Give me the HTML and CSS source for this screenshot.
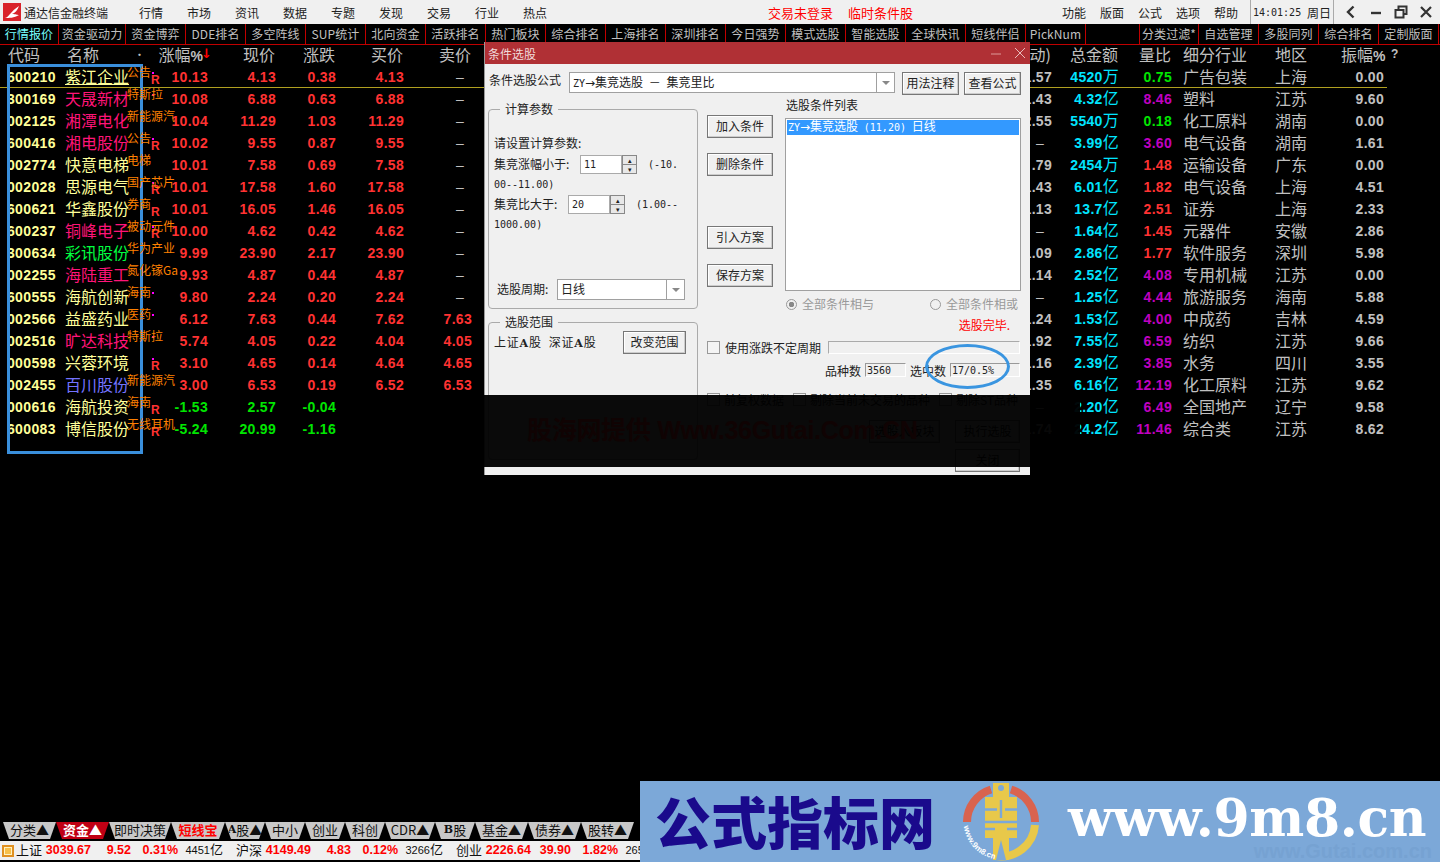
FILE: index.html
```html
<!DOCTYPE html>
<html lang="zh-CN">
<head>
    <meta charset="UTF-8">
    <title>通达信金融终端</title>
    <link rel="stylesheet" href="styles.css">
</head>
<body>
<div class="app">
    <div class="titlebar">
        <svg class="app-icon" viewBox="0 0 18 18"><rect width="18" height="18" fill="#d9232a"/><path d="M2 15 C6 14 8 8 16 3 C14 8 12 10 9 11 C13 11 14 12 16 12 C11 15 6 15 2 15Z" fill="#fff"/></svg>
        <span class="app-name">通达信金融终端</span>
        <nav class="menu menu-left"><span>行情</span><span>市场</span><span>资讯</span><span>数据</span><span>专题</span><span>发现</span><span>交易</span><span>行业</span><span>热点</span></nav>
        <div class="notice"><span>交易未登录</span><span>临时条件股</span></div>
        <nav class="menu menu-right"><span>功能</span><span>版面</span><span>公式</span><span>选项</span><span>帮助</span></nav>
        <div class="clock"><span class="clock-time">14:01:25</span><span class="clock-day">周日</span></div>
        <div class="win-btns">
            <svg viewBox="0 0 14 14"><path d="M9.5 1.5 L4 7 L9.5 12.5" fill="none" stroke="#333" stroke-width="2.4"/></svg>
            <svg viewBox="0 0 14 14"><path d="M2 8 H12" stroke="#333" stroke-width="2.4"/></svg>
            <svg viewBox="0 0 14 14"><path d="M1.5 5 H9.5 V12.5 H1.5Z M4.5 4.5 V1.5 H12.5 V9 H10" fill="none" stroke="#333" stroke-width="2"/></svg>
            <svg viewBox="0 0 14 14"><path d="M2 2 L12 12 M12 2 L2 12" stroke="#333" stroke-width="2.2"/></svg>
        </div>
    </div>

    <div class="tabbar">
        <span class="tab tab-first tab-on">行情报价</span>
        <span class="tab tab-w68">资金驱动力</span>
        <span class="tab">资金博弈</span>
        <span class="tab">DDE排名</span>
        <span class="tab">多空阵线</span>
        <span class="tab">SUP统计</span>
        <span class="tab">北向资金</span>
        <span class="tab">活跃排名</span>
        <span class="tab">热门板块</span>
        <span class="tab">综合排名</span>
        <span class="tab">上海排名</span>
        <span class="tab">深圳排名</span>
        <span class="tab">今日强势</span>
        <span class="tab">模式选股</span>
        <span class="tab">智能选股</span>
        <span class="tab">全球快讯</span>
        <span class="tab">短线伴侣</span>
        <span class="tab">PickNum</span>
        <span class="tab tab-w54"></span>
        <span class="tab tab-w59">分类过滤*</span>
        <span class="tab">自选管理</span>
        <span class="tab">多股同列</span>
        <span class="tab">综合排名</span>
        <span class="tab">定制版面</span>
    </div>

    <div class="quotes">
        <div class="row row-head">
            <span class="c-code">代码</span>
            <span class="c-name">名称<i class="head-dot">•</i></span>
            <span class="c-num">涨幅<b>%</b><i class="sort-arrow">↓</i></span>
            <span class="c-num">现价</span>
            <span class="c-num">涨跌</span>
            <span class="c-num">买价</span>
            <span class="c-num">卖价</span>
            <span class="c-num">(动)</span>
            <span class="c-num">总金额</span>
            <span class="c-num">量比</span>
            <span class="c-text">细分行业</span>
            <span class="c-text">地区</span>
            <span class="c-num">振幅<b>%</b></span>
            <span class="head-help">?</span>
        </div>

        <div class="row row-sel">
            <span class="c-code">600210</span>
            <span class="c-name n-yellow n-under">紫江企业<em class="tag">公告</em><i class="dot"></i><i class="flag">R</i></span>
            <span class="c-num up">10.13</span><span class="c-num up">4.13</span><span class="c-num up">0.38</span><span class="c-num up">4.13</span><span class="c-num dash">–</span>
            <span class="c-num plain">1.57</span>
            <span class="c-num total">4520<small>万</small></span><span class="c-num low">0.75</span>
            <span class="c-text">广告包装</span><span class="c-text">上海</span><span class="c-num plain">0.00</span>
        </div>
        <div class="row">
            <span class="c-code">300169</span>
            <span class="c-name n-pink">天晟新材<em class="tag">特斯拉</em><i class="dot"></i></span>
            <span class="c-num up">10.08</span><span class="c-num up">6.88</span><span class="c-num up">0.63</span><span class="c-num up">6.88</span><span class="c-num dash">–</span>
            <span class="c-num plain">1.43</span>
            <span class="c-num total">4.32<small>亿</small></span><span class="c-num high">8.46</span>
            <span class="c-text">塑料</span><span class="c-text">江苏</span><span class="c-num plain">9.60</span>
        </div>
        <div class="row">
            <span class="c-code">002125</span>
            <span class="c-name n-pink">湘潭电化<em class="tag">新能源汽</em></span>
            <span class="c-num up">10.04</span><span class="c-num up">11.29</span><span class="c-num up">1.03</span><span class="c-num up">11.29</span><span class="c-num dash">–</span>
            <span class="c-num plain">2.55</span>
            <span class="c-num total">5540<small>万</small></span><span class="c-num low">0.18</span>
            <span class="c-text">化工原料</span><span class="c-text">湖南</span><span class="c-num plain">0.00</span>
        </div>
        <div class="row">
            <span class="c-code">600416</span>
            <span class="c-name n-pink">湘电股份<em class="tag">公告</em><i class="dot"></i><i class="flag">R</i></span>
            <span class="c-num up">10.02</span><span class="c-num up">9.55</span><span class="c-num up">0.87</span><span class="c-num up">9.55</span><span class="c-num dash">–</span>
            <span class="c-num dash">–</span>
            <span class="c-num total">3.99<small>亿</small></span><span class="c-num high">3.60</span>
            <span class="c-text">电气设备</span><span class="c-text">湖南</span><span class="c-num plain">1.61</span>
        </div>
        <div class="row">
            <span class="c-code">002774</span>
            <span class="c-name n-yellow">快意电梯<em class="tag">电梯</em></span>
            <span class="c-num up">10.01</span><span class="c-num up">7.58</span><span class="c-num up">0.69</span><span class="c-num up">7.58</span><span class="c-num dash">–</span>
            <span class="c-num plain">.79</span>
            <span class="c-num total">2454<small>万</small></span><span class="c-num mid">1.48</span>
            <span class="c-text">运输设备</span><span class="c-text">广东</span><span class="c-num plain">0.00</span>
        </div>
        <div class="row">
            <span class="c-code">002028</span>
            <span class="c-name n-yellow">思源电气<em class="tag">国产芯片</em><i class="dot"></i><i class="flag">R</i></span>
            <span class="c-num up">10.01</span><span class="c-num up">17.58</span><span class="c-num up">1.60</span><span class="c-num up">17.58</span><span class="c-num dash">–</span>
            <span class="c-num plain">1.43</span>
            <span class="c-num total">6.01<small>亿</small></span><span class="c-num mid">1.82</span>
            <span class="c-text">电气设备</span><span class="c-text">上海</span><span class="c-num plain">4.51</span>
        </div>
        <div class="row">
            <span class="c-code">600621</span>
            <span class="c-name n-yellow">华鑫股份<em class="tag">券商</em><i class="flag">R</i></span>
            <span class="c-num up">10.01</span><span class="c-num up">16.05</span><span class="c-num up">1.46</span><span class="c-num up">16.05</span><span class="c-num dash">–</span>
            <span class="c-num plain">1.13</span>
            <span class="c-num total">13.7<small>亿</small></span><span class="c-num mid">2.51</span>
            <span class="c-text">证券</span><span class="c-text">上海</span><span class="c-num plain">2.33</span>
        </div>
        <div class="row">
            <span class="c-code">600237</span>
            <span class="c-name n-pink">铜峰电子<em class="tag">被动元件</em><i class="dot"></i><i class="flag">R</i></span>
            <span class="c-num up">10.00</span><span class="c-num up">4.62</span><span class="c-num up">0.42</span><span class="c-num up">4.62</span><span class="c-num dash">–</span>
            <span class="c-num dash">–</span>
            <span class="c-num total">1.64<small>亿</small></span><span class="c-num mid">1.45</span>
            <span class="c-text">元器件</span><span class="c-text">安徽</span><span class="c-num plain">2.86</span>
        </div>
        <div class="row">
            <span class="c-code">300634</span>
            <span class="c-name n-green">彩讯股份<em class="tag">华为产业</em></span>
            <span class="c-num up">9.99</span><span class="c-num up">23.90</span><span class="c-num up">2.17</span><span class="c-num up">23.90</span><span class="c-num dash">–</span>
            <span class="c-num plain">1.09</span>
            <span class="c-num total">2.86<small>亿</small></span><span class="c-num mid">1.77</span>
            <span class="c-text">软件服务</span><span class="c-text">深圳</span><span class="c-num plain">5.98</span>
        </div>
        <div class="row">
            <span class="c-code">002255</span>
            <span class="c-name n-pink">海陆重工<em class="tag">氮化镓Ga</em></span>
            <span class="c-num up">9.93</span><span class="c-num up">4.87</span><span class="c-num up">0.44</span><span class="c-num up">4.87</span><span class="c-num dash">–</span>
            <span class="c-num plain">1.14</span>
            <span class="c-num total">2.52<small>亿</small></span><span class="c-num high">4.08</span>
            <span class="c-text">专用机械</span><span class="c-text">江苏</span><span class="c-num plain">0.00</span>
        </div>
        <div class="row">
            <span class="c-code">600555</span>
            <span class="c-name n-yellow">海航创新<em class="tag">海南</em><i class="dot"></i></span>
            <span class="c-num up">9.80</span><span class="c-num up">2.24</span><span class="c-num up">0.20</span><span class="c-num up">2.24</span><span class="c-num dash">–</span>
            <span class="c-num dash">–</span>
            <span class="c-num total">1.25<small>亿</small></span><span class="c-num high">4.44</span>
            <span class="c-text">旅游服务</span><span class="c-text">海南</span><span class="c-num plain">5.88</span>
        </div>
        <div class="row">
            <span class="c-code">002566</span>
            <span class="c-name n-yellow">益盛药业<em class="tag">医药</em><i class="dot"></i></span>
            <span class="c-num up">6.12</span><span class="c-num up">7.63</span><span class="c-num up">0.44</span><span class="c-num up">7.62</span><span class="c-num up">7.63</span>
            <span class="c-num plain">1.24</span>
            <span class="c-num total">1.53<small>亿</small></span><span class="c-num high">4.00</span>
            <span class="c-text">中成药</span><span class="c-text">吉林</span><span class="c-num plain">4.59</span>
        </div>
        <div class="row">
            <span class="c-code">002516</span>
            <span class="c-name n-pink">旷达科技<em class="tag">特斯拉</em><i class="dot"></i></span>
            <span class="c-num up">5.74</span><span class="c-num up">4.05</span><span class="c-num up">0.22</span><span class="c-num up">4.04</span><span class="c-num up">4.05</span>
            <span class="c-num plain">1.92</span>
            <span class="c-num total">7.55<small>亿</small></span><span class="c-num high">6.59</span>
            <span class="c-text">纺织</span><span class="c-text">江苏</span><span class="c-num plain">9.66</span>
        </div>
        <div class="row">
            <span class="c-code">000598</span>
            <span class="c-name n-yellow">兴蓉环境<i class="dot"></i><i class="flag">R</i></span>
            <span class="c-num up">3.10</span><span class="c-num up">4.65</span><span class="c-num up">0.14</span><span class="c-num up">4.64</span><span class="c-num up">4.65</span>
            <span class="c-num plain">1.16</span>
            <span class="c-num total">2.39<small>亿</small></span><span class="c-num high">3.85</span>
            <span class="c-text">水务</span><span class="c-text">四川</span><span class="c-num plain">3.55</span>
        </div>
        <div class="row">
            <span class="c-code">002455</span>
            <span class="c-name n-blue">百川股份<em class="tag">新能源汽</em></span>
            <span class="c-num up">3.00</span><span class="c-num up">6.53</span><span class="c-num up">0.19</span><span class="c-num up">6.52</span><span class="c-num up">6.53</span>
            <span class="c-num plain">1.35</span>
            <span class="c-num total">6.16<small>亿</small></span><span class="c-num high">12.19</span>
            <span class="c-text">化工原料</span><span class="c-text">江苏</span><span class="c-num plain">9.62</span>
        </div>
        <div class="row">
            <span class="c-code">000616</span>
            <span class="c-name n-yellow">海航投资<em class="tag">海南</em><i class="flag">R</i></span>
            <span class="c-num down">-1.53</span><span class="c-num down">2.57</span><span class="c-num down">-0.04</span><span class="c-num"></span><span class="c-num"></span>
            <span class="c-num dash">–</span>
            <span class="c-num total">2.20<small>亿</small></span><span class="c-num high">6.49</span>
            <span class="c-text">全国地产</span><span class="c-text">辽宁</span><span class="c-num plain">9.58</span>
        </div>
        <div class="row">
            <span class="c-code">600083</span>
            <span class="c-name n-yellow">博信股份<em class="tag">无线耳机</em><i class="flag">R</i></span>
            <span class="c-num down">-5.24</span><span class="c-num down">20.99</span><span class="c-num down">-1.16</span><span class="c-num"></span><span class="c-num"></span>
            <span class="c-num plain">1.74</span>
            <span class="c-num total">24.2<small>亿</small></span><span class="c-num high">11.46</span>
            <span class="c-text">综合类</span><span class="c-text">江苏</span><span class="c-num plain">8.62</span>
        </div>
    </div>

    <div class="sheet-tabs">
        <span class="stab">分类▲</span>
        <span class="stab stab-on">资金▲</span>
        <span class="stab">即时决策</span>
        <span class="stab stab-red">短线宝</span>
        <span class="stab"><b>A</b>股▲</span>
        <span class="stab">中小</span>
        <span class="stab">创业</span>
        <span class="stab">科创</span>
        <span class="stab">CDR▲</span>
        <span class="stab"><b>B</b>股</span>
        <span class="stab">基金▲</span>
        <span class="stab">债券▲</span>
        <span class="stab">股转▲</span>
    </div>

    <div class="statusbar">
        <i class="status-icon"></i>
        <div class="index-group"><span>上证</span><b>3039.67</b><b>9.52</b><b>0.31%</b><span class="vol">4451<small>亿</small></span></div>
        <div class="index-group"><span>沪深</span><b>4149.49</b><b>4.83</b><b>0.12%</b><span class="vol">3266<small>亿</small></span></div>
        <div class="index-group"><span>创业</span><b>2226.64</b><b>39.90</b><b>1.82%</b><span class="vol">2659<small>亿</small></span></div>
    </div>
</div>

<!-- 条件选股 dialog -->
<div class="dialog">
    <div class="dialog-title">
        <span>条件选股</span>
        <svg viewBox="0 0 36 12"><path d="M1 7 H11" stroke="#d99" stroke-width="1"/><path d="M25 1 L35 11 M35 1 L25 11" stroke="#e8bcbc" stroke-width="1"/></svg>
    </div>
    <div class="formula-row">
        <label class="formula-label">条件选股公式</label>
        <div class="combo combo-formula"><span class="combo-value"><span class="latin">ZY</span><span class="arrow">→</span>集竞选股 － 集竞里比</span><i class="combo-arrow"></i></div>
        <button class="btn btn-top">用法注释</button>
        <button class="btn btn-top">查看公式</button>
    </div>
    <div class="dialog-main">
        <div class="col-left">
            <fieldset class="group group-params">
                <legend>计算参数</legend>
                <div class="param-line param-intro">请设置计算参数:</div>
                <div class="param-line param-first">
                    <span class="param-label label-a">集竞涨幅小于:</span>
                    <span class="spin"><span class="spin-input">11</span><span class="spin-btns"><i>▴</i><i>▾</i></span></span>
                    <span class="param-note">(-10.</span>
                </div>
                <div class="param-line mono">00--11.00)</div>
                <div class="param-line">
                    <span class="param-label label-b">集竞比大于:</span>
                    <span class="spin"><span class="spin-input">20</span><span class="spin-btns"><i>▴</i><i>▾</i></span></span>
                    <span class="param-note">(1.00--</span>
                </div>
                <div class="param-line mono">1000.00)</div>
                <div class="period-row">
                    <span class="period-label">选股周期:</span>
                    <div class="combo combo-period"><span class="combo-value">日线</span><i class="combo-arrow"></i></div>
                </div>
            </fieldset>
            <fieldset class="group group-range">
                <legend>选股范围</legend>
                <div class="range-row">
                    <span class="range-text">上证<b>A</b>股 &nbsp;深证<b>A</b>股</span>
                    <button class="btn">改变范围</button>
                </div>
            </fieldset>
        </div>
        <div class="col-right">
            <div class="col-right-top">
                <div class="col-buttons">
                    <button class="btn">加入条件</button>
                    <button class="btn">删除条件</button>
                    <button class="btn btn-far">引入方案</button>
                    <button class="btn">保存方案</button>
                </div>
                <div class="col-list">
                    <div class="list-title">选股条件列表</div>
                    <div class="listbox"><div class="list-item"><span class="latin">ZY</span><span class="arrow">→</span>集竞选股 <span class="latin">(11,20)</span> 日线</div></div>
                    <div class="radios">
                        <span class="radio-wrap"><i class="radio radio-on"></i>全部条件相与</span>
                        <span class="radio-wrap"><i class="radio"></i>全部条件相或</span>
                    </div>
                    <div class="done-msg">选股完毕.</div>
                </div>
            </div>
            <div class="period-check">
                <i class="check"></i><span>使用涨跌不定周期</span><i class="period-track"></i>
            </div>
            <div class="counts">
                <span>品种数</span><span class="count-field count-a">3560</span>
                <span>选中数</span><span class="count-field count-b">17/0.5%</span>
            </div>
            <div class="options">
                <span class="option"><i class="check"></i>前复权数据</span>
                <span class="option"><i class="check"></i>剔除当前未交易的品种</span>
                <span class="option"><i class="check"></i>剔除ST品种</span>
            </div>
            <div class="actions">
                <button class="btn btn-wide">选股入板块</button>
                <button class="btn btn-act">执行选股</button>
                <button class="btn btn-act btn-close">关闭</button>
            </div>
        </div>
    </div>
</div>

<!-- overlays on the screenshot -->
<div class="mark-rect"></div>
<div class="mark-ellipse"></div>
<div class="dark-band"><span>股海网提供 Www.36Gutai.Com.CN</span></div>

<div class="banner">
    <span class="banner-name">公式指标网</span>
    <svg class="banner-logo" viewBox="0 0 95 82">
        <path id="logo-rim" d="M9 46 A37.5 37.5 0 0 0 40 79" fill="none"/>
        <path d="M12 42 A34 34 0 0 1 36 9.5" fill="none" stroke="#d9634f" stroke-width="8"/>
        <path d="M56 9.5 A34 34 0 0 1 80 42" fill="none" stroke="#d9634f" stroke-width="8"/>
        <path d="M80 45 A34 34 0 0 1 41 76" fill="none" stroke="#e8c84a" stroke-width="8"/>
        <path d="M38 3 H54 V17 H62 V58 H54 V80 H38 V58 H30 V17 H38Z" fill="#e8c84a"/>
        <circle cx="46" cy="8" r="3" fill="#7ca8d8"/>
        <path d="M30 29.5 H42 M50 29.5 H62 M30 42 H62 M30 49 H40 M52 49 H62 M46 20 V38" stroke="#7ca8d8" stroke-width="2.4" fill="none"/>
        <path d="M46 60 L41 80 H51Z" fill="#7ca8d8"/>
        <text class="logo-url"><textPath href="#logo-rim">www.9m8.cn</textPath></text>
    </svg>
    <span class="banner-ghost">www.Gutai.com.cn</span>
    <span class="banner-url">www.9m8.cn</span>
</div>
</body>
</html>
```

FILE: styles.css
```css
* {
    box-sizing: border-box;
}
html, body {
    margin: 0;
    height: 100%;
    background: #000;
    overflow: hidden;
}
body {
    font-family: "Noto Sans CJK SC", "Liberation Sans", sans-serif;
    font-size: 12px;
    color: #222;
}
i, em {
    font-style: normal;
}
.app {
    display: flex;
    flex-direction: column;
    height: 862px;
    width: 1440px;
}

/* title bar */
.titlebar {
    display: flex;
    align-items: center;
    height: 24px;
    background: #f0f0f0;
    flex: none;
}
.app-icon {
    width: 18px;
    height: 18px;
    margin-left: 3px;
}
.app-name {
    margin-left: 3px;
    width: 84px;
}
.menu {
    display: flex;
}
.menu span {
    width: 24px;
}
.menu-left {
    gap: 24px;
    margin-left: 31px;
}
.menu-right {
    gap: 14px;
    margin-left: auto;
}
.notice {
    display: flex;
    gap: 15px;
    margin-left: 221px;
    color: #f00;
    font-size: 13px;
}
.clock {
    display: flex;
    align-items: center;
    gap: 6px;
    height: 24px;
    margin-left: 12px;
    padding: 0 2px;
    width: 84px;
    border-left: 1px solid #aaa;
    border-right: 1px solid #aaa;
    white-space: nowrap;
}
.clock-time {
    font-family: "DejaVu Sans Mono", monospace;
    font-size: 10px;
    width: 48px;
    flex: none;
}
.clock-day {
    flex: none;
}
.win-btns {
    display: flex;
    gap: 11px;
    padding: 0 7px 0 10px;
}
.win-btns svg {
    width: 14px;
    height: 14px;
}

/* top tabs */
.tabbar {
    display: flex;
    height: 21px;
    flex: none;
    background: #000;
    border-bottom: 1px solid #c00000;
}
.tab {
    width: 60px;
    text-align: center;
    line-height: 19px;
    color: #c0c0c0;
    border-right: 1px solid #c00000;
    flex: none;
    white-space: nowrap;
    letter-spacing: .1px;
}
.tab-first { width: 59px; }
.tab-w68 { width: 67px; }
.tab-w54 { width: 54px; }
.tab-w59 { width: 59px; }
.tab-on { color: #7ff; }

/* quote table */
.quotes {
    flex: 1;
    overflow: hidden;
}
.row {
    display: grid;
    grid-template-columns: 48px 94px 58px 68px 60px 68px 68px 580px 67px 53px 92px 77px 43px;
    width: 1387px;
    height: 22px;
    padding-left: 8px;
    align-items: start;
    color: #c0c0c0;
    font-size: 16px;
    line-height: 20px;
}
.row-head {
    grid-template-columns: 48px 94px 58px 68px 60px 68px 68px 580px 67px 53px 92px 77px 43px 14px;
    width: 1440px;
    height: 21px;
    line-height: 19px;
}
.row-sel {
    box-shadow: inset 0 -1px 0 #b0a020;
}
.row span {
    white-space: nowrap;
}
.c-code {
    display: flex;
    justify-content: flex-end;
    overflow: hidden;
    color: #ffff99;
    font: bold 14px/22px "Liberation Sans", sans-serif;
    letter-spacing: .4px;
}
.row-head .c-code {
    justify-content: flex-start;
    overflow: visible;
    color: #c0c0c0;
    font: 16px/19px "Noto Sans CJK SC", sans-serif;
    letter-spacing: 0;
}
.c-name {
    position: relative;
    padding-left: 9px;
    height: 22px;
}
.row-head .c-name {
    padding-left: 11px;
}
.head-dot {
    position: absolute;
    left: 78px;
    top: 0;
    font-size: 11px;
}
.sort-arrow {
    position: absolute;
    right: -4px;
    top: 1px;
    color: #f00;
    font: bold 13px/16px "DejaVu Sans", sans-serif;
}
.row-head .c-num:nth-child(3) {
    padding-right: 5px;
}
.head-help {
    padding-left: 7px;
    font: bold 12px/19px "Liberation Sans", sans-serif;
}
.c-num {
    text-align: right;
    font: bold 14px/22px "Liberation Sans", sans-serif;
    letter-spacing: .3px;
}
.row-head .c-num {
    position: relative;
    padding-right: 1px;
    font: 16px/19px "Noto Sans CJK SC", sans-serif;
    letter-spacing: 0;
}
.row-head .c-num b {
    font: bold 14px/1 "Liberation Sans", sans-serif;
}
.c-num small {
    font: 16px/1 "Noto Sans CJK SC", sans-serif;
}
.c-text {
    padding-left: 11px;
}
.n-yellow { color: #ffff99; }
.n-pink { color: #ff1478; }
.n-green { color: #00ff40; }
.n-blue { color: #7373ff; }
.n-under::before {
    content: "";
    position: absolute;
    left: 9px;
    width: 64px;
    top: 18px;
    height: 1px;
    background: #ffff99;
}
.up { color: #ff3232; }
.down { color: #00e600; }
.plain { color: #c0c0c0; }
.dash {
    color: #c0c0c0;
    font-weight: normal;
    padding-right: 8px;
}
.total { color: #00e5ff; }
.low { color: #00e600; }
.mid { color: #ff3232; }
.high { color: #c000c0; }
.tag {
    position: absolute;
    left: 71px;
    top: -4px;
    color: #ff8000;
    font-size: 12px;
    z-index: 1;
}
.dot {
    position: absolute;
    left: 96px;
    top: 6px;
    width: 2px;
    height: 2px;
    background: #ff00ff;
}
.flag {
    position: absolute;
    left: 95px;
    top: 2px;
    color: #ff3232;
    font: bold 12px/24px "Liberation Sans", sans-serif;
}

/* sheet tabs at the bottom */
.sheet-tabs {
    display: flex;
    height: 17px;
    flex: none;
    padding-left: 3px;
    margin-bottom: 2px;
}
.stab {
    display: flex;
    align-items: center;
    justify-content: center;
    height: 17px;
    padding-bottom: 2px;
    width: 53px;
    background: #c8c8c8;
    color: #111;
    font-size: 13px;
    white-space: nowrap;
    clip-path: polygon(0 0, 100% 0, calc(100% - 6px) 100%, 6px 100%);
}
.stab:nth-child(3) { width: 62px; }
.stab:nth-child(4) { width: 54px; }
.stab:nth-child(5), .stab:nth-child(6), .stab:nth-child(7), .stab:nth-child(8), .stab:nth-child(10) { width: 40px; }
.stab:nth-child(9) { width: 50px; }
.stab-on {
    background: #c00014;
    color: #fff;
    font-weight: bold;
}
.stab-red {
    color: #f00;
    font-weight: bold;
}
.stab b {
    font: bold 11px "DejaVu Serif", serif;
}

/* index bar */
.statusbar {
    display: flex;
    align-items: center;
    width: 640px;
    height: 19px;
    flex: none;
    margin-bottom: 2px;
    background: #f0f0f0;
    overflow: hidden;
    color: #111;
}
.status-icon {
    width: 12px;
    height: 12px;
    margin: 0 2px;
    flex: none;
    background: #f7c04a;
    border: 2px solid #e09020;
    box-shadow: inset 0 0 0 1px #fff2c0;
}
.index-group {
    display: grid;
    grid-template-columns: 28px 47px 40px 47px 45px 13px;
    flex: none;
    width: 220px;
    font-size: 13px;
    line-height: 15px;
    white-space: nowrap;
}
.index-group b {
    color: #f00;
    text-align: right;
    font: bold 12.5px/17px "Liberation Sans", sans-serif;
}
.vol {
    text-align: right;
    font: 11px/17px "Liberation Sans", sans-serif;
}
.vol small {
    font: 13px/1 "Noto Sans CJK SC", sans-serif;
}

/* dialog */
.dialog {
    position: absolute;
    left: 484px;
    top: 42px;
    width: 546px;
    height: 433px;
    background: #f0f0f0;
    border-left: 1px solid #999;
    overflow: hidden;
}
.dialog-title {
    display: flex;
    align-items: center;
    justify-content: space-between;
    height: 22px;
    padding: 0 4px 0 3px;
    background: #b03035;
    color: #f0dada;
}
.dialog-title svg {
    width: 36px;
    height: 12px;
}
.formula-row {
    display: flex;
    align-items: flex-start;
    height: 23px;
    margin-top: 8px;
    padding-left: 4px;
}
.formula-label {
    width: 80px;
    line-height: 16px;
}
.combo {
    display: flex;
    align-items: center;
    background: #fff;
    border: 1px solid #a0a0a0;
}
.combo-value {
    flex: 1;
    padding: 0 0 2px 3px;
    white-space: nowrap;
    word-spacing: 3px;
}
.latin {
    font-family: "DejaVu Sans Mono", monospace;
    font-size: 10px;
    word-spacing: 0;
}
.arrow {
    font-family: "DejaVu Sans", sans-serif;
    font-size: 12px;
}
.combo-arrow {
    position: relative;
    width: 18px;
    height: 100%;
    border-left: 1px solid #a0a0a0;
}
.combo-arrow::after {
    content: "";
    position: absolute;
    left: 5px;
    top: 8px;
    border: 4px solid transparent;
    border-top: 4px solid #888;
}
.combo-formula {
    width: 326px;
    height: 21px;
}
.combo-period {
    width: 128px;
    height: 21px;
    margin-left: 8px;
}
.btn {
    display: block;
    width: 66px;
    height: 23px;
    padding: 0 0 3px;
    font: 12px "Noto Sans CJK SC", sans-serif;
    color: #222;
    background: #f0f0f0;
    border: 1px solid #777;
    box-shadow: inset -1px -1px 0 #ccc, inset 1px 1px 0 #fff;
}
.btn-top {
    width: 57px;
    margin-left: 7px;
}
.btn-top + .btn-top {
    margin-left: 5px;
}
.dialog-main {
    display: flex;
    margin-top: 3px;
    padding-left: 3px;
}
.col-left {
    width: 219px;
    flex: none;
    padding-top: 4px;
}
.group {
    margin: 0;
    width: 210px;
    padding: 0 0 0 5px;
    border: 1px solid #aaa;
    border-radius: 4px;
}
.group legend {
    margin-left: 6px;
    padding: 0 5px;
    line-height: 14px;
}
.group-params {
    height: 207px;
}
.group-range {
    height: 145px;
    margin-top: 6px;
}
.param-line {
    display: flex;
    align-items: center;
    height: 20px;
    white-space: nowrap;
}
.param-intro {
    margin-top: 17px;
    padding-bottom: 2px;
}
.param-first {
    margin-top: 1px;
}
.mono, .param-note {
    font-family: "DejaVu Sans Mono", monospace;
    font-size: 10px;
}
.param-label {
    flex: none;
    margin-bottom: 2px;
}
.label-a { width: 86px; }
.label-b { width: 74px; }
.spin {
    display: flex;
    height: 19px;
    width: 57px;
    flex: none;
}
.spin-input {
    width: 42px;
    padding-left: 3px;
    line-height: 18px;
    background: #fff;
    border: 1px solid #aaa;
    font-family: "DejaVu Sans Mono", monospace;
    font-size: 10px;
}
.spin-btns {
    display: flex;
    flex-direction: column;
    width: 15px;
    border: 1px solid #888;
    background: #e8e8e8;
}
.spin-btns i {
    flex: 1;
    font-size: 7px;
    line-height: 8px;
    text-align: center;
}
.spin-btns i + i {
    border-top: 1px solid #888;
}
.param-note {
    margin-left: 11px;
}
.period-row {
    display: flex;
    align-items: center;
    margin-top: 45px;
    padding-left: 3px;
}
.period-label {
    width: 52px;
    margin-bottom: 2px;
}
.range-row {
    display: flex;
    align-items: center;
    justify-content: space-between;
    width: 192px;
    margin-top: 2px;
    white-space: nowrap;
}
.range-text {
    margin-bottom: 2px;
    letter-spacing: .8px;
}
.range-row .btn {
    width: 63px;
}
.range-row b {
    font: bold 11px "DejaVu Serif", serif;
}
.col-right {
    width: 314px;
    flex: none;
}
.col-right-top {
    display: flex;
}
.col-buttons {
    width: 78px;
    padding-top: 17px;
    flex: none;
}
.col-buttons .btn + .btn {
    margin-top: 15px;
}
.col-buttons .btn-far {
    margin-top: 50px !important;
}
.col-list {
    width: 236px;
}
.list-title {
    padding-left: 1px;
    line-height: 14px;
}
.listbox {
    height: 173px;
    margin-top: 6px;
    padding: 1px;
    background: #fff;
    border: 1px solid #a0a0a0;
}
.list-item {
    height: 15px;
    padding-left: 1px;
    line-height: 11px;
    background: #3399ff;
    color: #fff;
    white-space: nowrap;
    word-spacing: 3px;
}
.radios {
    display: flex;
    justify-content: space-between;
    margin-top: 6px;
    padding: 0 3px 0 1px;
    line-height: 14px;
    color: #999;
}
.radio-wrap {
    display: flex;
    align-items: center;
    gap: 5px;
}
.radio {
    width: 11px;
    height: 11px;
    border: 1px solid #999;
    border-radius: 50%;
    background: #f0f0f0;
}
.radio-on {
    background: radial-gradient(circle, #888 0 2.5px, #f0f0f0 3px);
}
.done-msg {
    margin-top: 7px;
    padding-right: 11px;
    line-height: 14px;
    text-align: right;
    color: #f00;
}
.period-check {
    display: flex;
    align-items: center;
    height: 14px;
    margin-top: 8px;
    white-space: nowrap;
}
.check {
    display: inline-block;
    width: 13px;
    height: 13px;
    flex: none;
    background: #f4f4f4;
    border: 1px solid #999;
}
.period-check span {
    margin-left: 5px;
    width: 96px;
}
.period-track {
    width: 192px;
    height: 13px;
    margin-left: 7px;
    background: #f0f0f0;
    border: 1px solid #aaa;
    border-right-color: #fff;
    border-bottom-color: #fff;
}
.counts {
    display: flex;
    align-items: center;
    justify-content: flex-end;
    width: 313px;
    height: 14px;
    margin-top: 9px;
}
.count-field {
    height: 14px;
    line-height: 13px;
    padding-left: 1px;
    font-family: "DejaVu Sans Mono", monospace;
    font-size: 10px;
    border-left: 1px solid #999;
    border-top: 1px solid #999;
    border-right: 1px solid #fff;
    border-bottom: 1px solid #fff;
}
.count-a {
    width: 41px;
    margin: 0 4px;
}
.count-b {
    width: 70px;
    margin-left: 4px;
}
.options {
    display: flex;
    gap: 9px;
    margin-top: 14px;
    white-space: nowrap;
}
.option {
    display: flex;
    align-items: center;
    gap: 4px;
}
.actions {
    display: grid;
    grid-template-columns: 71px 65px;
    justify-content: end;
    column-gap: 15px;
    row-gap: 6px;
    width: 313px;
    margin-top: 12px;
}
.btn-wide { width: 71px; }
.btn-act { width: 65px; }
.btn-close { grid-column: 2; }

/* marks drawn over the screenshot */
.mark-rect {
    position: absolute;
    left: 7px;
    top: 64px;
    width: 136px;
    height: 390px;
    border: 3px solid #3a8fdc;
    pointer-events: none;
}
.mark-ellipse {
    position: absolute;
    left: 925px;
    top: 344px;
    width: 85px;
    height: 45px;
    border: 3px solid #3a95e0;
    border-radius: 50%;
}
.dark-band {
    position: absolute;
    left: 340px;
    top: 395px;
    width: 740px;
    height: 72px;
    padding: 19px 0 0 187px;
    background: rgba(0, 0, 0, .96);
}
.dark-band span {
    color: #100303;
    font: bold 25px/32px "Liberation Sans", "Noto Sans CJK SC", sans-serif;
    letter-spacing: -.3px;
    white-space: nowrap;
}

/* watermark banner */
.banner {
    position: absolute;
    left: 640px;
    top: 781px;
    width: 800px;
    height: 81px;
    background: #7ca8d8;
}
.banner-name {
    position: absolute;
    left: 15px;
    top: 3px;
    color: #1a0a8c;
    font: 900 56px/72px "Noto Sans CJK SC", sans-serif;
    white-space: nowrap;
}
.banner-logo {
    position: absolute;
    left: 315px;
    top: -1px;
    width: 95px;
    height: 82px;
}
.logo-url {
    fill: #fff;
    font: bold 8px "Liberation Sans", sans-serif;
}
.banner-url {
    position: absolute;
    left: 428px;
    top: 6px;
    color: #fff;
    font: bold 52px/62px "DejaVu Serif", serif;
    letter-spacing: -.4px;
    white-space: nowrap;
}
.banner-ghost {
    position: absolute;
    right: 8px;
    top: 60px;
    color: #76a2d2;
    font: bold 20px/20px "Liberation Sans", sans-serif;
    white-space: nowrap;
}
```
